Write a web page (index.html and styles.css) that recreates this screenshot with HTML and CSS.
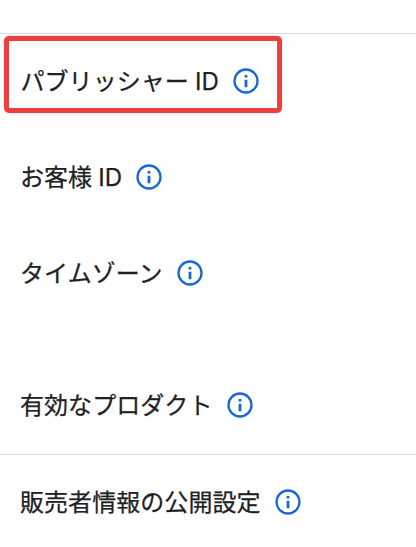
FILE: index.html
```html
<!DOCTYPE html>
<html lang="ja">
<head>
<meta charset="utf-8">
<title>アカウント情報</title>
<link rel="stylesheet" href="styles.css">
</head>
<body>
<svg class="defs" aria-hidden="true"><symbol id="info" viewBox="0 0 26 26"><circle cx="13" cy="13" r="11.5" fill="none" stroke="currentColor" stroke-width="2.3"/><path d="M11.6 7h2.800v2.500h-2.800zM11.600 11.800h2.800v7.400h-2.800z" fill="currentColor"/></symbol></svg>
<main class="settings">
<div class="row publisher"><span>パブリッシャー <span class="latin">ID</span></span><svg class="icon"><use href="#info"/></svg></div>
<div class="row customer"><span>お客様 <span class="latin">ID</span></span><svg class="icon"><use href="#info"/></svg></div>
<div class="row timezone"><span>タイムゾーン</span><svg class="icon"><use href="#info"/></svg></div>
<div class="row products"><span>有効なプロダクト</span><svg class="icon"><use href="#info"/></svg></div>
<div class="row seller"><span>販売者情報の公開設定</span><svg class="icon"><use href="#info"/></svg></div>
</main>
</body>
</html>
```
FILE: styles.css
```css
* { box-sizing: border-box; }
body { margin: 0; background: #fff; color: #202124; font: 400 24px/36px "Noto Sans CJK JP", sans-serif; letter-spacing: 0.06px; -webkit-text-stroke: 0.25px #202124; }
.defs { display: none; }
.settings { margin-top: 33px; border-top: 1px solid #dadce0; }
.row { display: flex; align-items: center; height: 96px; padding-left: 20px; white-space: nowrap; }
.row > span { padding-bottom: 2px; }
.publisher > span, .customer > span { padding-bottom: 0; }
.latin { margin-left: 0.7px; font-family: Inter, sans-serif; }
.icon { width: 26px; height: 26px; margin-left: 14.300px; color: #1967d2; }
.publisher { width: 278px; height: 77px; margin: 2px 0 0 4px; padding: 13px 0 0 11.500px; border: 5px solid #f03e3e; border-radius: 5px; box-shadow: 0 0 1px #888; }
.customer { margin-top: 16px; }
.customer .icon { margin-left: 13.500px; }
.products { margin: 36px 0 1px; }
.seller { height: 95px; border-top: 1px solid #dadce0; }
```
